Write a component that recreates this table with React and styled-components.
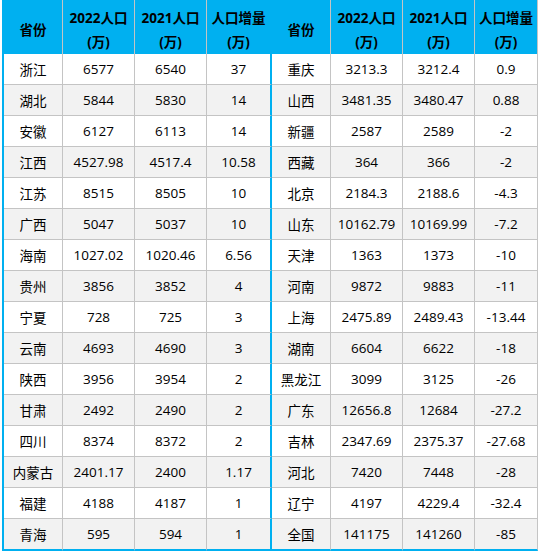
import React from "react";
import styled, { createGlobalStyle, css } from "styled-components";

const Global = createGlobalStyle`
  html, body { margin: 0; padding: 0; background: #fff; }
  body { font-family: "Open Sans", "Noto Sans CJK SC", sans-serif; }
`;

const BLUE = "#00B0F0";
const GRID = "#C4C4C4";

const Page = styled.div`
  padding-left: 2px;
`;

const Sheet = styled.div`
  display: grid;
  grid-template-columns: 59px 72px 72px 65px 59px 72px 72px 63px;
  width: max-content;
  border-left: 2px solid ${BLUE};
`;

const HeadCell = styled.div`
  box-sizing: border-box;
  height: 54px;
  padding-top: 6px;
  background: ${BLUE};
  border-right: ${(p) => (p.$divider ? `2px solid ${BLUE}` : `1px solid ${GRID}`)};
  display: flex;
  flex-direction: column;
  align-items: center;
  justify-content: center;
  font-family: "Open Sans", "Noto Sans CJK SC", sans-serif;
  font-weight: 700;
  font-size: 13.5px;
  line-height: 24px;
  color: #000;
  white-space: nowrap;
`;

const Cell = styled.div`
  box-sizing: border-box;
  height: ${(p) => (p.$last ? "32px" : "31px")};
  background: ${(p) => (p.$shade ? "#F2F2F2" : "#FFFFFF")};
  border-right: ${(p) => (p.$divider ? `2px solid ${BLUE}` : `1px solid ${GRID}`)};
  ${(p) =>
    p.$last
      ? css`border-bottom: 2px solid ${BLUE};`
      : css`border-bottom: 1px solid ${GRID};`}
  display: flex;
  align-items: center;
  justify-content: center;
  font-family: "Open Sans", "Noto Sans CJK SC", sans-serif;
  font-size: 13.5px;
  color: #000;
  white-space: nowrap;
`;

const left = [
  ["浙江", "6577", "6540", "37"],
  ["湖北", "5844", "5830", "14"],
  ["安徽", "6127", "6113", "14"],
  ["江西", "4527.98", "4517.4", "10.58"],
  ["江苏", "8515", "8505", "10"],
  ["广西", "5047", "5037", "10"],
  ["海南", "1027.02", "1020.46", "6.56"],
  ["贵州", "3856", "3852", "4"],
  ["宁夏", "728", "725", "3"],
  ["云南", "4693", "4690", "3"],
  ["陕西", "3956", "3954", "2"],
  ["甘肃", "2492", "2490", "2"],
  ["四川", "8374", "8372", "2"],
  ["内蒙古", "2401.17", "2400", "1.17"],
  ["福建", "4188", "4187", "1"],
  ["青海", "595", "594", "1"],
];

const right = [
  ["重庆", "3213.3", "3212.4", "0.9"],
  ["山西", "3481.35", "3480.47", "0.88"],
  ["新疆", "2587", "2589", "-2"],
  ["西藏", "364", "366", "-2"],
  ["北京", "2184.3", "2188.6", "-4.3"],
  ["山东", "10162.79", "10169.99", "-7.2"],
  ["天津", "1363", "1373", "-10"],
  ["河南", "9872", "9883", "-11"],
  ["上海", "2475.89", "2489.43", "-13.44"],
  ["湖南", "6604", "6622", "-18"],
  ["黑龙江", "3099", "3125", "-26"],
  ["广东", "12656.8", "12684", "-27.2"],
  ["吉林", "2347.69", "2375.37", "-27.68"],
  ["河北", "7420", "7448", "-28"],
  ["辽宁", "4197", "4229.4", "-32.4"],
  ["全国", "141175", "141260", "-85"],
];

const headers = [
  ["省份"],
  ["2022人口", "(万)"],
  ["2021人口", "(万)"],
  ["人口增量", "(万)"],
];

export default function App() {
  const head = [...headers, ...headers];
  return (
    <Page>
      <Global />
      <Sheet>
        {head.map((h, i) => (
          <HeadCell key={"h" + i} $divider={i === 3}>
            {h.map((line, j) => (
              <span key={j}>{line}</span>
            ))}
          </HeadCell>
        ))}
        {left.map((row, r) => {
          const cells = [...row, ...right[r]];
          return cells.map((v, c) => (
            <Cell
              key={r + "-" + c}
              $shade={r % 2 === 1}
              $divider={c === 3}
              $last={r === left.length - 1}
            >
              {v}
            </Cell>
          ));
        })}
      </Sheet>
    </Page>
  );
}
